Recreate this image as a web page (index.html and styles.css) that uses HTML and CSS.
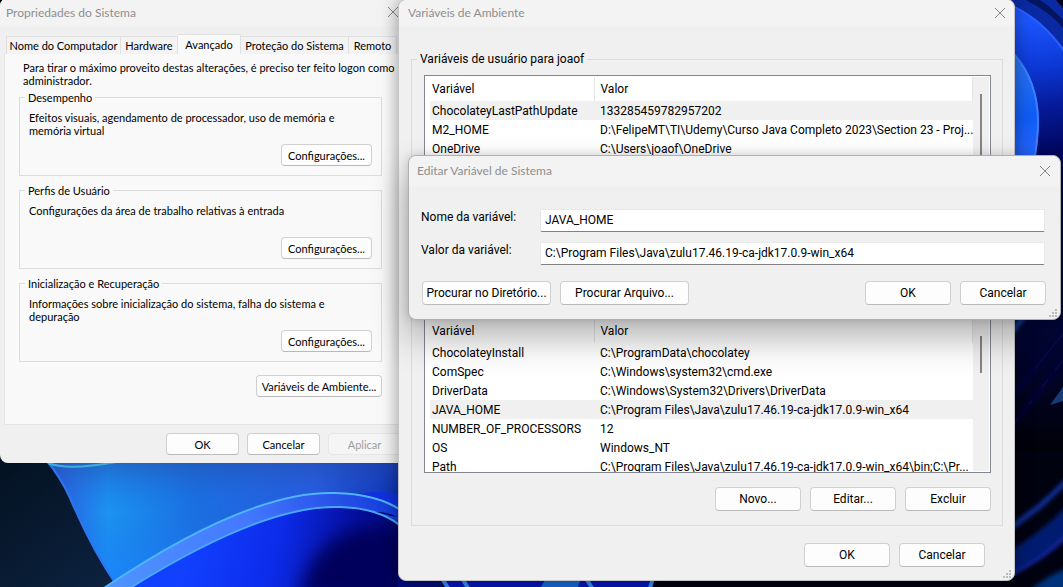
FILE: index.html
```html
<!DOCTYPE html>
<html lang="pt-BR">
<head>
<meta charset="utf-8">
<title>Variáveis de Ambiente</title>
<link rel="stylesheet" href="styles.css">
</head>
<body>
<main class="desktop">
  <svg class="wallpaper" viewBox="0 0 1063 587" preserveAspectRatio="xMidYMid slice" aria-hidden="true">
    <defs>
      <linearGradient id="night" x1="0" y1="0" x2="1" y2="1"><stop offset="0" stop-color="#03101f"/><stop offset="1" stop-color="#0e2748"/></linearGradient>
      <linearGradient id="petal" gradientUnits="userSpaceOnUse" x1="60" y1="0" x2="400" y2="0"><stop offset="0" stop-color="#2a62e0"/><stop offset=".14" stop-color="#1b93f2"/><stop offset=".4" stop-color="#1a6fe0"/><stop offset=".75" stop-color="#2a58e0"/><stop offset="1" stop-color="#0a22a8"/></linearGradient>
      <linearGradient id="petalShade" gradientUnits="userSpaceOnUse" x1="0" y1="462" x2="0" y2="587"><stop offset="0" stop-color="#2450b0" stop-opacity=".6"/><stop offset=".4" stop-color="#1a70e8" stop-opacity="0"/><stop offset="1" stop-color="#1a80ff" stop-opacity=".7"/></linearGradient>
      <linearGradient id="band" gradientUnits="userSpaceOnUse" x1="110" y1="587" x2="400" y2="500"><stop offset="0" stop-color="#4e94ff"/><stop offset=".5" stop-color="#4478ff"/><stop offset="1" stop-color="#1238d8"/></linearGradient>
      <linearGradient id="inner" gradientUnits="userSpaceOnUse" x1="190" y1="540" x2="400" y2="587"><stop offset="0" stop-color="#1240ff"/><stop offset=".4" stop-color="#0c2cea"/><stop offset=".75" stop-color="#040c98"/><stop offset="1" stop-color="#020560"/></linearGradient>
      <linearGradient id="ring" gradientUnits="userSpaceOnUse" x1="1030" y1="20" x2="1050" y2="155"><stop offset="0" stop-color="#1c56ff"/><stop offset=".35" stop-color="#0c38d4"/><stop offset=".65" stop-color="#051a98"/><stop offset="1" stop-color="#02065c"/></linearGradient>
      <linearGradient id="core" gradientUnits="userSpaceOnUse" x1="1015" y1="60" x2="1036" y2="155"><stop offset="0" stop-color="#2a74f4"/><stop offset=".6" stop-color="#0f5cf6"/><stop offset="1" stop-color="#2866ff"/></linearGradient>
      <linearGradient id="dusk" gradientUnits="userSpaceOnUse" x1="0" y1="155" x2="0" y2="450"><stop offset="0" stop-color="#02065c"/><stop offset=".6" stop-color="#020638"/><stop offset="1" stop-color="#010108"/></linearGradient>
      <filter id="soft" filterUnits="userSpaceOnUse" x="1000" y="300" width="80" height="300"><feGaussianBlur stdDeviation="2"/></filter>
      <filter id="haze"><feGaussianBlur stdDeviation="9"/></filter>
    </defs>
    <rect width="1063" height="587" fill="#01020f"/>
    <rect y="440" width="200" height="147" fill="url(#night)"/>
    <g>
      <path d="M46 460Q62 478 72 502Q92 552 118 587H400V460Z" fill="url(#petal)"/>
      <path d="M46 460Q62 478 72 502Q92 552 118 587H400V460Z" fill="url(#petalShade)"/>
      <path d="M46 460Q60 476 70 498Q92 550 119 589" fill="none" stroke="#2f74f0" stroke-width="2"/>
      <path d="M48 463Q68 471 116 462" fill="none" stroke="#3cb0d8" stroke-width="2"/>
      <path d="M350 496Q380 488 400 496V520Z" fill="#1030e0"/>
      <path d="M104 588Q250 490 335 493Q378 494 402 511V587Z" fill="url(#band)"/>
      <path d="M130 588Q265 504 340 507Q380 508 402 527V587Z" fill="url(#inner)"/>
      <path d="M300 600Q310 535 370 528Q400 526 410 540V600Z" fill="#02045c" filter="url(#haze)"/>
      <path d="M104 588Q250 490 335 493Q378 494 402 511" fill="none" stroke="#4fb4f8" stroke-width="2"/>
      <path d="M130 588Q265 504 340 507Q380 508 402 527" fill="none" stroke="#4aa8f4" stroke-width="2"/>
      <path d="M376 512Q388 512 397 517L388 515Z" fill="#02045c"/>
    </g>
    <g>
      <rect x="398" y="575" width="44" height="12" fill="#020b78"/>
      <path d="M438 575H655L652 587H444Z" fill="#0616b8"/>
      <path d="M541 587L548 575H582L578 587Z" fill="#1668d8"/>
      <path d="M442 578L448 588M462 578L468 588M586 578L592 588M653 578L650 588" fill="none" stroke="#3c88f0" stroke-width="4"/>
    </g>
    <g>
      <rect x="1010" width="53" height="160" fill="#0a2aa4"/>
      <path d="M1026 0Q1050 12 1063 28V20Q1052 8 1040 0Z" fill="#04145e"/>
      <path d="M1056 0L1063 8V0Z" fill="#01021c"/>
      <path d="M1010 4Q1042 18 1063 50V160H1010Z" fill="url(#ring)"/>
      <path d="M1010 5Q1042 19 1064 51" fill="none" stroke="#2860ff" stroke-width="2"/>
      <path d="M1010 50Q1038 76 1039 120Q1039 140 1034 162H1010Z" fill="url(#core)"/>
      <path d="M1012 52Q1037 78 1038 120Q1038 140 1034 162" fill="none" stroke="#3a80ff" stroke-width="2"/>
      <rect x="1010" y="155" width="53" height="295" fill="url(#dusk)"/>
    </g>
    <g filter="url(#soft)" fill="none">
      <path d="M1008 402L1066 330M1008 432L1066 356" stroke="#060c48" stroke-width="3"/>
      <path d="M1010 334L1026 314" stroke="#2058d8" stroke-width="4"/>
      <path d="M1008 530L1040 506L1068 480" stroke="#1030a0" stroke-width="5"/>
      <path d="M1008 552Q1045 530 1068 504V538Q1045 560 1008 578Z" fill="#061a70"/>
      <path d="M1008 576Q1045 558 1068 534" stroke="#1228a8" stroke-width="3"/>
      <path d="M1030 590Q1050 574 1068 568V590Z" fill="#05307c"/>
    </g>
    <path d="M1050 405L1063 387V401Z" fill="#163c78"/>
  </svg>

  <section class="window props" aria-label="Propriedades do Sistema">
    <header class="titlebar">
      <h2 class="title">Propriedades do Sistema</h2>
      <button class="close" aria-label="Fechar"><svg viewBox="0 0 12 12"><path d="M1 1L11 11M11 1L1 11"/></svg></button>
    </header>
    <div class="tabs" role="tablist">
      <button class="tab tab-name" role="tab">Nome do Computador</button>
      <button class="tab tab-hardware" role="tab">Hardware</button>
      <button class="tab tab-advanced selected" role="tab" aria-selected="true">Avançado</button>
      <button class="tab tab-protection" role="tab">Proteção do Sistema</button>
      <button class="tab tab-remote" role="tab">Remoto</button>
    </div>
    <div class="panel" role="tabpanel">
      <p class="note">Para tirar o máximo proveito destas alterações, é preciso ter feito logon como<br>administrador.</p>
      <fieldset class="group card">
        <legend>Desempenho</legend>
        <p>Efeitos visuais, agendamento de processador, uso de memória e<br>memória virtual</p>
        <button class="btn small">Configurações...</button>
      </fieldset>
      <fieldset class="group card">
        <legend>Perfis de Usuário</legend>
        <p>Configurações da área de trabalho relativas à entrada</p>
        <button class="btn small">Configurações...</button>
      </fieldset>
      <fieldset class="group card">
        <legend>Inicialização e Recuperação</legend>
        <p>Informações sobre inicialização do sistema, falha do sistema e<br>depuração</p>
        <button class="btn small">Configurações...</button>
      </fieldset>
      <button class="btn small env">Variáveis de Ambiente...</button>
    </div>
    <footer class="actions">
      <button class="btn small">OK</button>
      <button class="btn small">Cancelar</button>
      <button class="btn small" disabled>Aplicar</button>
    </footer>
  </section>

  <section class="window vars" aria-label="Variáveis de Ambiente">
    <header class="titlebar">
      <h2 class="title">Variáveis de Ambiente</h2>
      <button class="close" aria-label="Fechar"><svg viewBox="0 0 12 12"><path d="M1 1L11 11M11 1L1 11"/></svg></button>
    </header>
    <fieldset class="group user">
      <legend>Variáveis de usuário para joaof</legend>
      <div class="list">
        <table>
          <thead><tr><th>Variável</th><th>Valor</th></tr></thead>
          <tbody>
            <tr class="active"><td>ChocolateyLastPathUpdate</td><td>133285459782957202</td></tr>
            <tr><td>M2_HOME</td><td>D:\FelipeMT\TI\Udemy\Curso Java Completo 2023\Section 23 - Proj...</td></tr>
            <tr><td>OneDrive</td><td>C:\Users\joaof\OneDrive</td></tr>
          </tbody>
        </table>
        <div class="scroll"><span class="thumb long"></span></div>
      </div>
    </fieldset>
    <fieldset class="group system" aria-label="Variáveis do sistema">
      <div class="list">
        <table>
          <thead><tr><th>Variável</th><th>Valor</th></tr></thead>
          <tbody>
            <tr><td>ChocolateyInstall</td><td>C:\ProgramData\chocolatey</td></tr>
            <tr><td>ComSpec</td><td>C:\Windows\system32\cmd.exe</td></tr>
            <tr><td>DriverData</td><td>C:\Windows\System32\Drivers\DriverData</td></tr>
            <tr class="active"><td>JAVA_HOME</td><td>C:\Program Files\Java\zulu17.46.19-ca-jdk17.0.9-win_x64</td></tr>
            <tr><td>NUMBER_OF_PROCESSORS</td><td>12</td></tr>
            <tr><td>OS</td><td>Windows_NT</td></tr>
            <tr><td>Path</td><td>C:\Program Files\Java\zulu17.46.19-ca-jdk17.0.9-win_x64\bin;C:\Pr...</td></tr>
          </tbody>
        </table>
        <div class="scroll"><span class="thumb"></span></div>
      </div>
      <div class="actions">
        <button class="btn">Novo...</button>
        <button class="btn">Editar...</button>
        <button class="btn">Excluir</button>
      </div>
    </fieldset>
    <footer class="actions bottom">
      <button class="btn">OK</button>
      <button class="btn">Cancelar</button>
    </footer>
    <svg class="grip" viewBox="0 0 8 8" aria-hidden="true"><path d="M6 0h2v2H6zM3 3h2v2H3zM6 3h2v2H6zM0 6h2v2H0zM3 6h2v2H3zM6 6h2v2H6z"/></svg>
  </section>

  <section class="window edit" role="dialog" aria-label="Editar Variável de Sistema">
    <header class="titlebar">
      <h2 class="title">Editar Variável de Sistema</h2>
      <button class="close" aria-label="Fechar"><svg viewBox="0 0 12 12"><path d="M1 1L11 11M11 1L1 11"/></svg></button>
    </header>
    <form class="form">
      <label for="name">Nome da variável:</label>
      <input id="name" type="text" value="JAVA_HOME">
      <label for="value">Valor da variável:</label>
      <input id="value" type="text" value="C:\Program Files\Java\zulu17.46.19-ca-jdk17.0.9-win_x64">
    </form>
    <footer class="actions">
      <button class="btn wide">Procurar no Diretório...</button>
      <button class="btn wide">Procurar Arquivo...</button>
      <button class="btn confirm">OK</button>
      <button class="btn">Cancelar</button>
    </footer>
    <svg class="grip" viewBox="0 0 8 8" aria-hidden="true"><path d="M6 0h2v2H6zM3 3h2v2H3zM6 3h2v2H6zM0 6h2v2H0zM3 6h2v2H3zM6 6h2v2H6z"/></svg>
  </section>
</main>
</body>
</html>
```
FILE: styles.css
```css
* { box-sizing: border-box; }
body { margin: 0; color: #000; font: 12px/16px Roboto, sans-serif; }
button, input { font: inherit; color: inherit; }
p, h2 { margin: 0; }

.desktop { position: relative; min-height: 100vh; overflow: hidden; background: #01020f; }
.wallpaper { position: absolute; inset: 0; width: 100%; height: 100%; }

/* Windows */
.window { position: absolute; display: flex; flex-direction: column; background: #f0f0f0; border-radius: 8px; }
.titlebar { display: flex; align-items: center; justify-content: space-between; background: #f3f3f3; border-radius: 8px 8px 0 0; }
.title { font-family: Lato, sans-serif; font-size: 12px; font-weight: 400; color: #8e8e8e; }
.close { display: flex; padding: 0; border: 0; background: none; }
.close svg { width: 12px; height: 12px; fill: none; stroke: #868686; }
.grip { position: absolute; right: 3px; bottom: 2px; width: 8px; height: 8px; fill: #bcbcbc; }

.btn { width: 86px; height: 24px; padding: 0; background: #fdfdfd; border: 1px solid #d0d0d0; border-bottom-color: #bababa; border-radius: 4px; white-space: nowrap; }
.btn.small { width: 73px; height: 22px; }
.btn:disabled { color: #9d9d9d; background: #f5f5f5; border-color: #e6e6e6; }
.actions { display: flex; gap: 9px; }

.group { min-width: 0; margin: 0; border: 1px solid #dcdcdc; }
.group legend { padding: 0 3px; }

/* System properties */
.props { left: 0; top: -2px; width: 411px; height: 465px; font: 11px/13px Lato, sans-serif; }
.props .titlebar { height: 28px; padding: 0 12px 0 6px; }
.tabs { display: flex; align-items: flex-end; height: 28px; padding-left: 6px; }
.tab { height: 18px; padding: 0; background: #f3f3f3; border: 1px solid #e0e0e0; border-width: 1px 1px 0 0; white-space: nowrap; }
.tab-name { width: 115px; border-left-width: 1px; }
.tab-hardware { width: 57px; }
.tab-advanced { width: 63px; }
.tab-protection { width: 108px; }
.tab-remote { width: 48px; }
.tab.selected { height: 20px; background: #f9f9f9; }
.panel { display: flex; flex-direction: column; flex: 1; margin-left: 4px; padding: 7px 28px 0 14px; background: #f9f9f9; border: 1px solid #e5e5e5; border-top: 0; }
.note { padding-left: 4px; margin-bottom: 4px; white-space: nowrap; }
.card { display: flex; flex-direction: column; height: 85px; margin-bottom: 8px; padding: 7px 9px 10px 9px; }
.card legend { margin-left: -4px; }
.card p { min-height: 33px; white-space: nowrap; }
.card .btn { width: 91px; align-self: flex-end; }
.btn.env { width: 126px; margin-top: 5px; align-self: flex-end; }
.props .actions { padding: 8px 10px 8px; gap: 8px; justify-content: flex-end; }

/* Environment variables */
.vars { left: 398px; top: -1px; width: 617px; height: 582px; border: 1px solid #c4c4c4; box-shadow: 0 0 18px rgba(0, 0, 0, .4); }
.vars .titlebar { height: 26px; padding: 0 8px 0 9px; }
.vars .group { display: flex; flex-direction: column; margin: 0 11px 0 12px; padding: 0 11px 13px 12px; }
.vars .group legend { margin-left: -7px; }
.vars .user { height: 232px; margin-top: 25px; padding-top: 8px; }
.vars .system { height: 226px; margin-top: 17px; padding-top: 16px; }
.vars .actions { justify-content: flex-end; margin-top: 14px; }
.vars .bottom { margin-top: 17px; padding-right: 29px; }
.list { display: flex; height: 156px; overflow: hidden; padding: 1px 1px 1px 5px; background: #fff; border: 1px solid #828790; }
table { flex: 1; width: 100%; min-width: 0; align-self: flex-start; border-collapse: collapse; table-layout: fixed; }
th, td { height: 19px; padding: 0 0 0 6px; text-align: left; font-weight: 400; white-space: nowrap; }
th { height: 24px; border-right: 1px solid #e5e5e5; }
th:first-child { width: 164px; }
th:first-child, td:first-child { padding-left: 2px; }
.active { background: #f0f0f0; }
.scroll { display: flex; flex: none; justify-content: center; width: 16px; padding-top: 17px; background: #f0f0f0; }
.thumb { width: 2px; height: 37px; background: #858585; }
.thumb.long { height: 110px; }

/* Edit dialog */
.edit { left: 408px; top: 155px; width: 653px; height: 165px; border: 1px solid #b0b0b0; box-shadow: 0 18px 36px rgba(0, 0, 0, .3), 0 0 10px rgba(0, 0, 0, .15); }
.edit .titlebar { height: 30px; padding: 0 9px 0 8px; }
.form { display: grid; grid-template-columns: 119px 1fr; row-gap: 10px; padding: 23px 15px 16px 12px; }
.form input { width: 100%; height: 23px; padding: 0 4px 2px; background: #fff; border: 1px solid #e8e8e8; border-bottom-color: #808080; border-radius: 2px; outline: 0; }
.edit .actions { padding: 0 14px 0 13px; }
.btn.wide { width: 129px; }
.confirm { margin-left: auto; }
```
